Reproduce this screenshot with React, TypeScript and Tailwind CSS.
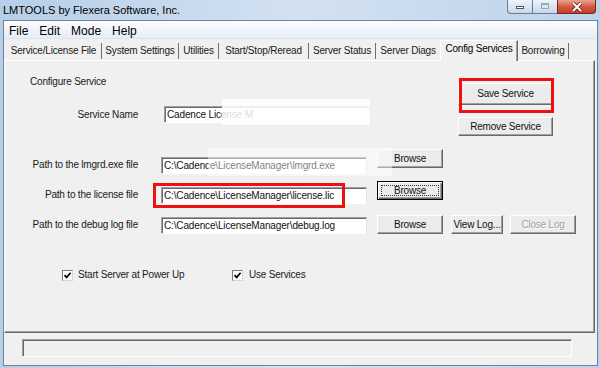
import clsx from "clsx";

const tabs = [
  { label: "Service/License File", w: "w-[96px]" },
  { label: "System Settings", w: "w-[77px]" },
  { label: "Utilities", w: "w-[40px]" },
  { label: "Start/Stop/Reread", w: "w-[90px]" },
  { label: "Server Status", w: "w-[67px]" },
  { label: "Server Diags", w: "w-[64px]", noSep: true },
  { label: "Config Services", w: "w-[78px]", active: true },
  { label: "Borrowing", w: "w-[51px]" },
];

const menus = ["File", "Edit", "Mode", "Help"];

type BtnProps = {
  children: React.ReactNode;
  className?: string;
  disabled?: boolean;
  focused?: boolean;
};

const Btn = ({ children, className, disabled, focused }: BtnProps) => (
  <div
    className={clsx(
      "relative flex items-center justify-center bg-[#ececec] text-[10px] leading-none tracking-[-0.2px]",
      focused
        ? "border border-black shadow-[inset_1px_1px_0_#fff,inset_-1px_-1px_0_#696969,inset_-2px_-2px_0_#a0a0a0]"
        : "border border-t-white border-l-white border-r-[#696969] border-b-[#696969] shadow-[inset_-1px_-1px_0_#a0a0a0]",
      disabled ? "text-[#a0a0a0] [text-shadow:1px_1px_0_#fff]" : "text-[#111]",
      className
    )}
  >
    {focused && <div className="absolute inset-[3px] border border-dotted border-[#333]" />}
    {children}
  </div>
);

const Field = ({ children }: { children: React.ReactNode }) => (
  <div className="w-[206px] h-[17px] flex items-center pl-[2px] bg-white border border-t-[#a0a0a0] border-l-[#a0a0a0] border-r-[#e3e3e3] border-b-white shadow-[inset_1px_1px_0_#696969] text-[10px] leading-none tracking-[-0.15px] text-[#111] whitespace-nowrap overflow-hidden">
    {children}
  </div>
);

const Label = ({ children, className }: { children: React.ReactNode; className?: string }) => (
  <div className={clsx("w-[133px] text-right text-[10px] leading-[12px] tracking-[-0.2px] text-[#1a1a1a]", className)}>
    {children}
  </div>
);

const Check = () => (
  <div className="w-[11px] h-[11px] bg-white border border-t-[#7a7a7a] border-l-[#7a7a7a] border-r-[#d6d6d6] border-b-[#d6d6d6] flex items-center justify-center">
    <svg width="9" height="9" viewBox="0 0 9 9">
      <path d="M1.5 4.2 L3.6 6.4 L7.6 1.8" fill="none" stroke="#000" strokeWidth="1.7" />
    </svg>
  </div>
);

export default function App() {
  return (
    <div className="w-[600px] h-[368px] overflow-hidden flex flex-col bg-gradient-to-r from-[#b6cee8] via-[#d3e2f2] to-[#bdd3ea] font-['Liberation_Sans',Arial,sans-serif]">
      {/* title bar */}
      <div className="h-[20px] flex items-start justify-between pr-[4px]">
        <span className="pl-[3px] text-[11px] leading-[20px] text-black">LMTOOLS by Flexera Software, Inc.</span>
        <div className="flex h-[14px]">
          <div className="w-[25px] h-full flex items-end justify-center pb-[4px] bg-gradient-to-b from-[#eef3f9] to-[#c8d7e9] border-b border-l border-[#6a7d95] rounded-bl-[4px]">
            <div className="w-[8px] h-[3px] bg-white border border-[#45566b]" />
          </div>
          <div className="w-[25px] h-full flex items-start justify-center pt-[3px] bg-gradient-to-b from-[#eef3f9] to-[#c8d7e9] border-b border-l border-[#6a7d95]">
            <div className="w-[8px] h-[6px] border border-[#9aaabd] border-t-2" />
          </div>
          <div className="w-[39px] h-full flex items-center justify-center bg-gradient-to-b from-[#e9a594] via-[#d35a42] to-[#c23d27] border-b border-l border-r border-[#6e2b22] rounded-br-[4px]">
            <svg width="12" height="10" viewBox="0 0 12 10">
              <path d="M2 1 L10 9 M10 1 L2 9" stroke="#5a1d15" strokeWidth="3.4" />
              <path d="M2 1 L10 9 M10 1 L2 9" stroke="#fff" strokeWidth="2" />
            </svg>
          </div>
        </div>
      </div>

      {/* client area */}
      <div className="ml-[3px] mr-[2px] h-[346px] flex flex-col bg-[#f0f0f0] border border-[#6f829a]">
        {/* menu */}
        <div className="h-[18px] pt-[2px] flex items-start gap-[11px] pl-[5px] bg-gradient-to-b from-[#fbfcfe] to-[#e7edf6] border-b border-[#dde4ee] text-[12px] leading-[16px] text-black">
          {menus.map((m) => (
            <span key={m}>{m}</span>
          ))}
        </div>

        {/* tabs */}
        <div className="h-[21px] pl-[2px] flex items-end relative z-10">
          {tabs.map((t) =>
            t.active ? (
              <div
                key={t.label}
                className={clsx(
                  t.w,
                  "h-[21px] -mb-[1px] pt-[2px] text-center text-[10px] leading-[12px] tracking-[-0.2px] bg-[#f0f0f0] border-t border-l border-t-white border-l-white border-r border-r-[#696969] shadow-[inset_-1px_0_0_#a0a0a0]"
                )}
              >
                {t.label}
              </div>
            ) : (
              <div
                key={t.label}
                className={clsx(
                  t.w,
                  "h-[16px] mb-[1px] text-center text-[10px] leading-[16px] tracking-[-0.2px] text-[#1a1a1a]",
                  !t.noSep && "border-r border-r-[#6e6e6e]"
                )}
              >
                {t.label}
              </div>
            )
          )}
        </div>

        {/* panel */}
        <div className="relative w-[591px] h-[273px] flex flex-col border border-t-white border-l-white border-r-[#696969] border-b-[#696969] shadow-[inset_-1px_-1px_0_#a0a0a0]">
          {/* top section */}
          <div className="h-[79px] flex">
            <div className="w-[376px] flex flex-col">
              <div className="pl-[25px] pt-[15px] text-[10px] leading-[12px] tracking-[-0.2px] text-[#1a1a1a]">Configure Service</div>
              <div className="mt-[18px] flex items-center">
                <Label className="w-[130px]">Service Name</Label>
                <div className="ml-[26px]">
                  <Field>Cadence License M</Field>
                </div>
              </div>
            </div>
            <div className="ml-[77px] flex flex-col">
              <Btn className="mt-[22px] w-[95px] h-[22px]">Save Service</Btn>
              <Btn className="mt-[12px] w-[95px] h-[19px]">Remove Service</Btn>
            </div>
          </div>

          {/* lmgrd */}
          <div className="flex items-start">
            <Label className="mt-[19px]">Path to the lmgrd.exe file</Label>
            <div className="ml-[23px] mt-[17px]">
              <Field>C:\Cadence\LicenseManager\lmgrd.exe</Field>
            </div>
            <Btn className="ml-[10px] mt-[9px] w-[66px] h-[19px]">Browse</Btn>
          </div>

          {/* license */}
          <div className="flex items-start">
            <Label className="mt-[15px]">Path to the license file</Label>
            <div className="ml-[23px] mt-[13px]">
              <Field>C:\Cadence\LicenseManager\license.lic</Field>
            </div>
            <Btn focused className="ml-[10px] mt-[7px] w-[66px] h-[19px]">Browse</Btn>
          </div>

          {/* debug log */}
          <div className="flex items-start">
            <Label className="mt-[15px]">Path to the debug log file</Label>
            <div className="ml-[23px] mt-[13px]">
              <Field>C:\Cadence\LicenseManager\debug.log</Field>
            </div>
            <Btn className="ml-[10px] mt-[11px] w-[66px] h-[19px]">Browse</Btn>
            <Btn className="ml-[8px] mt-[11px] w-[52px] h-[19px]">View Log...</Btn>
            <Btn disabled className="ml-[7px] mt-[11px] w-[66px] h-[19px]">Close Log</Btn>
          </div>

          {/* checkboxes */}
          <div className="mt-[35px] pl-[57px] flex items-center text-[10px] leading-[12px] tracking-[-0.2px] text-[#1a1a1a]">
            <div className="w-[170px] flex items-center gap-[5px]">
              <Check />
              <span>Start Server at Power Up</span>
            </div>
            <div className="flex items-center gap-[6px]">
              <Check />
              <span>Use Services</span>
            </div>
          </div>

          {/* screenshot overlays / annotations */}
          <div className="absolute left-[217px] top-[38px] w-[148px] h-[26px] bg-white/85" />
          <div className="absolute left-[203px] top-[87px] w-[184px] h-[28px] bg-white/45" />
          <div className="absolute left-[454px] top-[17px] w-[95px] h-[35px] border-[3px] border-[#ee1111]" />
          <div className="absolute left-[148px] top-[122px] w-[192px] h-[25px] border-[3px] border-[#ee1111]" />
        </div>

        {/* status bar */}
        <div className="flex-1 pl-[18px] pt-[6px]">
          <div className="w-[550px] h-[18px] border border-t-[#a0a0a0] border-l-[#a0a0a0] border-r-white border-b-white shadow-[inset_1px_1px_0_#696969]" />
        </div>
      </div>
    </div>
  );
}
